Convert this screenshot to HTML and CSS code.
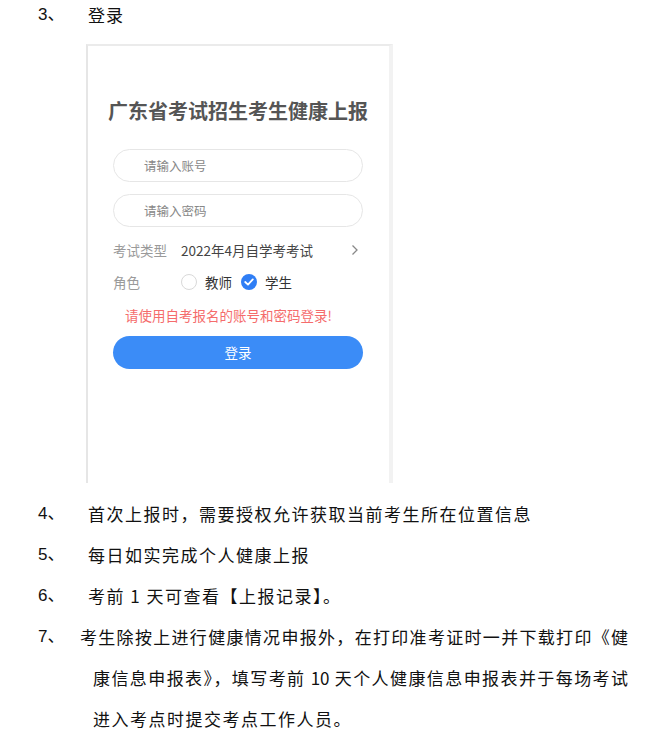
FILE: index.html
```html
<!DOCTYPE html>
<html lang="zh-CN">
<head>
<meta charset="utf-8">
<title>登录</title>
<link rel="stylesheet" href="styles.css">
</head>
<body>
<div class="doc">
  <div class="item step3"><span class="num">3、</span><span class="txt">登录</span></div>

  <div class="shot">
    <div class="card">
      <h1 class="title">广东省考试招生考生健康上报</h1>
      <div class="field">请输入账号</div>
      <div class="field second">请输入密码</div>
      <div class="row type-row">
        <span class="label">考试类型</span>
        <span class="value">2022年4月自学考考试</span>
        <svg class="arrow" width="8" height="12" viewBox="0 0 8 12"><path d="M1.5 1.5 L6 6 L1.5 10.5" fill="none" stroke="#888" stroke-width="1.3"/></svg>
      </div>
      <div class="row role-row">
        <span class="label">角色</span>
        <span class="radio"></span><span class="opt">教师</span>
        <span class="radio checked"><svg width="10" height="8" viewBox="0 0 10 8"><path d="M1.2 4 L4 6.6 L8.8 1.4" fill="none" stroke="#fff" stroke-width="1.8" stroke-linecap="round" stroke-linejoin="round"/></svg></span><span class="opt">学生</span>
      </div>
      <div class="tip">请使用自考报名的账号和密码登录!</div>
      <div class="btn">登录</div>
    </div>
  </div>

  <div class="item"><span class="num">4、</span><span class="txt">首次上报时，需要授权允许获取当前考生所在位置信息</span></div>
  <div class="item"><span class="num">5、</span><span class="txt">每日如实完成个人健康上报</span></div>
  <div class="item"><span class="num">6、</span><span class="txt">考前 1 天可查看【上报记录】。</span></div>
  <div class="item seven">
    <span class="num">7、</span>
    <div class="para">
      <span class="line first">考生除按上进行健康情况申报外，在打印准考证时一并下载打印《健</span>
      <span class="line cont">康信息申报表》，填写考前 10 天个人健康信息申报表并于每场考试</span>
      <span class="line cont last">进入考点时提交考点工作人员。</span>
    </div>
  </div>
</div>
</body>
</html>
```
FILE: styles.css
```css
html, body {
  margin: 0;
  padding: 0;
  background: #ffffff;
}
body {
  font-family: "Liberation Sans", "Noto Sans CJK SC", sans-serif;
  color: #111;
}
.doc {
  width: 661px;
}
.item {
  display: flex;
  font-size: 17px;
  line-height: 41px;
  letter-spacing: 1.5px;
}
.item .num {
  width: 50px;
  padding-left: 38px;
  flex: none;
  letter-spacing: 0;
}
.item .txt {
  font-family: "Noto Sans CJK SC", sans-serif;
}
.step3 {
  line-height: 30px;
}
.step3 .txt {
  letter-spacing: 1px;
}
.shot {
  margin: 14px 0 10px 86px;
  width: 307px;
  height: 439px;
  box-sizing: border-box;
  border-top: 2px solid #ebebeb;
  border-left: 2px solid #e6e6e6;
  border-right: 4px solid #f2f2f2;
  background: #fff;
  overflow: hidden;
}
.card {
  font-family: "Noto Sans CJK SC", sans-serif;
  display: flex;
  flex-direction: column;
  padding: 0 26px 0 25px;
}
.title {
  margin: 50px -12px 0 -12px;
  font-size: 20px;
  line-height: 30px;
  font-weight: bold;
  color: #555;
  text-align: center;
  letter-spacing: 0;
  white-space: nowrap;
}
.field {
  margin-top: 23px;
  height: 33px;
  box-sizing: border-box;
  border: 1px solid #e6e6e6;
  border-radius: 17px;
  padding-left: 30px;
  font-size: 12.5px;
  line-height: 31px;
  color: #888;
}
.field.second {
  margin-top: 12px;
}
.row {
  display: flex;
  align-items: center;
  height: 32px;
  font-size: 13.5px;
}
.type-row {
  margin-top: 7px;
}
.label {
  width: 68px;
  color: #9a9a9a;
  flex: none;
}
.value {
  color: #444;
  flex: 1;
}
.arrow {
  margin-right: 4px;
}
.radio {
  width: 16px;
  height: 16px;
  box-sizing: border-box;
  border: 1px solid #d9d9d9;
  border-radius: 50%;
  flex: none;
  display: flex;
  align-items: center;
  justify-content: center;
}
.radio.checked {
  border: none;
  background: #2f7ef5;
}
.opt {
  color: #333;
  margin-left: 8px;
  margin-right: 9px;
}
.tip {
  margin-top: 0;
  padding-left: 12px;
  height: 34px;
  line-height: 34px;
  font-size: 13.5px;
  color: #f56c6c;
}
.btn {
  margin-top: 4px;
  height: 33px;
  border-radius: 17px;
  background: #3b8cf7;
  color: #fff;
  text-align: center;
  line-height: 33px;
  font-size: 13.5px;
}
.seven .num {
  width: 42px;
}
.para {
  width: 548px;
  font-family: "Noto Sans CJK SC", sans-serif;
  letter-spacing: 0;
}
.line {
  display: block;
  text-align: justify;
  text-align-last: justify;
}
.line.cont {
  margin-left: 13px;
}
.line.last {
  text-align-last: left;
  letter-spacing: 1.5px;
}
```
